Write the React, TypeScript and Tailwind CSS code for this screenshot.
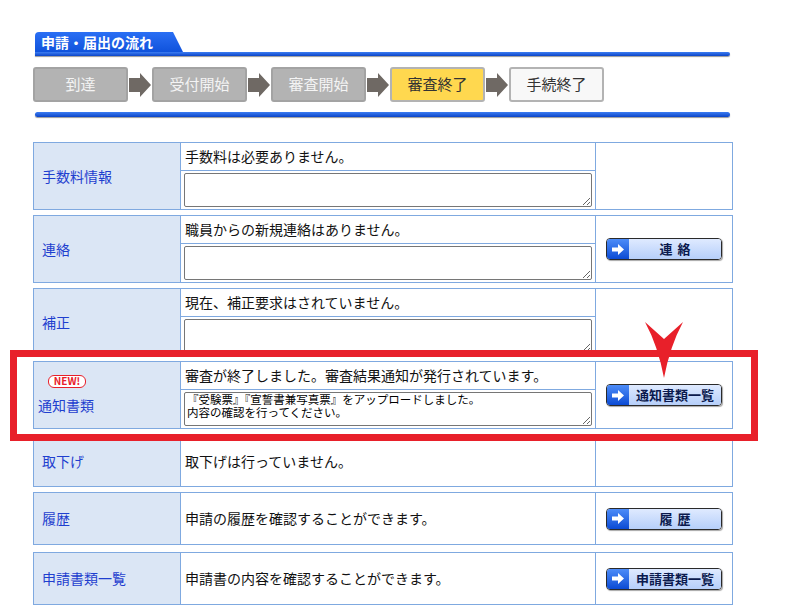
import React from 'react';

const FONT = "font-['Noto_Sans_CJK_JP','Noto_Sans',sans-serif]";

type Step = { label: string; tone: 'done' | 'current' | 'todo' };

const steps: Step[] = [
  { label: '到達', tone: 'done' },
  { label: '受付開始', tone: 'done' },
  { label: '審査開始', tone: 'done' },
  { label: '審査終了', tone: 'current' },
  { label: '手続終了', tone: 'todo' },
];

function StepArrow() {
  return (
    <svg width="22" height="24" viewBox="0 0 22 24" className="mx-px shrink-0">
      <path d="M0 5h11V0l11 12-11 12v-5H0z" fill="#6f6964" />
    </svg>
  );
}

function StepBox({ step }: { step: Step }) {
  const tone =
    step.tone === 'done'
      ? 'bg-[#b3b3b3] border-[#a3a3a3] text-[#f4f4f4]'
      : step.tone === 'current'
        ? 'bg-[#ffd84f] border-[#b3b3b3] text-[#333]'
        : 'bg-[#f8f8f8] border-[#b3b3b3] text-[#333]';
  return (
    <div
      className={`flex h-[35px] w-[95px] shrink-0 items-center justify-center rounded-[3px] border-2 text-[15px] ${tone}`}
    >
      {step.label}
    </div>
  );
}

function LinkButton({ label, spaced }: { label: string; spaced?: boolean }) {
  return (
    <div className="flex h-[22px] w-[116px] overflow-hidden rounded-[4px] border border-[#2a2a2a] shadow-[1px_1px_1px_rgba(0,0,0,0.35)]">
      <div className="flex w-[22px] items-center justify-center bg-gradient-to-b from-[#4d8cf8] to-[#0a4ad4]">
        <svg width="12" height="11" viewBox="0 0 12 11">
          <path d="M0 3.5h6V0l6 5.5-6 5.5V7.5H0z" fill="#fff" />
        </svg>
      </div>
      <div
        className={`flex flex-1 items-center justify-center bg-gradient-to-b from-[#dfeaff] to-[#b6cffa] text-[13px] font-bold text-[#0b1a4e] ${
          spaced ? 'tracking-[5px] pl-[5px]' : ''
        }`}
      >
        {label}
      </div>
    </div>
  );
}

function Row({
  label,
  text,
  note,
  button,
  badge,
}: {
  label: string;
  text: string;
  note?: string;
  button?: React.ReactNode;
  badge?: boolean;
}) {
  return (
    <div className="flex h-[68px] border border-[#7fa9e0]">
      <div
        className={`flex w-[147px] shrink-0 flex-col justify-center border-r border-[#7fa9e0] bg-[#dbe6f5] text-[14px] text-[#1f3fcf] ${
          badge ? 'pl-[4px]' : 'pl-[8px]'
        }`}
      >
        {badge && (
          <span className="mb-[7px] ml-[10px] flex h-[13px] w-[38px] items-center justify-center rounded-[6px] border-[1.5px] border-[#e8202a] bg-white text-[10px] font-bold leading-none text-[#e8202a]">
            NEW!
          </span>
        )}
        <span>{label}</span>
      </div>
      <div className="flex w-[415px] shrink-0 flex-col border-r border-[#7fa9e0]">
        <div className="flex h-[28px] items-center border-b border-[#7fa9e0] pl-[4px] text-[14px] text-[#111]">
          {text}
        </div>
        <div className="flex-1 px-[3px] pt-[2px]">
          <textarea
            readOnly
            defaultValue={note ?? ''}
            className={`block h-[34px] w-full rounded-[2px] border border-[#767676] bg-white px-[2px] py-0 text-[11.5px] leading-[13px] text-black outline-none ${FONT}`}
          />
        </div>
      </div>
      <div className="flex flex-1 items-center justify-center">{button}</div>
    </div>
  );
}

function SimpleRow({
  label,
  text,
  button,
  height,
}: {
  label: string;
  text: string;
  button?: React.ReactNode;
  height: string;
}) {
  return (
    <div className={`flex border border-[#7fa9e0] ${height}`}>
      <div className="flex w-[147px] shrink-0 items-center border-r border-[#7fa9e0] bg-[#dbe6f5] pl-[8px] text-[14px] text-[#1f3fcf]">
        {label}
      </div>
      <div className="flex w-[415px] shrink-0 items-center border-r border-[#7fa9e0] pl-[4px] text-[14px] text-[#111]">
        {text}
      </div>
      <div className="flex flex-1 items-center justify-center">{button}</div>
    </div>
  );
}

export default function App() {
  return (
    <div className={`relative h-[606px] w-[796px] overflow-hidden bg-white pl-[33px] pt-[32px] ${FONT}`}>
      {/* heading */}
      <div className="w-[697px] pl-[2px]">
        <div className="flex h-[20px] w-[148px] items-center rounded-tl-[4px] bg-gradient-to-b from-[#2a6ff4] to-[#0f52dc] pl-[6px] text-[14px] font-bold text-white [clip-path:polygon(0_0,138px_0,148px_100%,0_100%)]">
          申請・届出の流れ
        </div>
        <div className="h-[4px] rounded-r-[2px] bg-gradient-to-b from-[#3c7cf2] to-[#0b44c8] shadow-[0_1px_1px_#9a9a9a]" />
      </div>

      {/* steps */}
      <div className="mt-[11px] flex items-center">
        {steps.map((s, i) => (
          <React.Fragment key={s.label}>
            {i > 0 && <StepArrow />}
            <StepBox step={s} />
          </React.Fragment>
        ))}
      </div>

      <div className="ml-[2px] mt-[10px] h-[5px] w-[695px] rounded-[3px] bg-gradient-to-b from-[#3c7cf2] to-[#0b44c8] shadow-[0_1px_1px_#9a9a9a]" />

      {/* rows */}
      <div className="mt-[25px] flex w-[700px] flex-col gap-[5px]">
        <Row label="手数料情報" text="手数料は必要ありません。" />
        <Row label="連絡" text="職員からの新規連絡はありません。" button={<LinkButton label="連絡" spaced />} />
        <Row label="補正" text="現在、補正要求はされていません。" />
        <Row
          badge
          label="通知書類"
          text="審査が終了しました。審査結果通知が発行されています。"
          note={'『受験票』『宣誓書兼写真票』をアップロードしました。\n内容の確認を行ってください。'}
          button={<LinkButton label="通知書類一覧" />}
        />
        <div className="mt-px">
          <SimpleRow label="取下げ" text="取下げは行っていません。" height="h-[52px]" />
        </div>
        <SimpleRow label="履歴" text="申請の履歴を確認することができます。" height="h-[53px]" button={<LinkButton label="履歴" spaced />} />
        <div className="mt-[2px]">
          <SimpleRow
            label="申請書類一覧"
            text="申請書の内容を確認することができます。"
            height="h-[53px]"
            button={<LinkButton label="申請書類一覧" />}
          />
        </div>
      </div>

      {/* highlight overlay */}
      <div className="pointer-events-none absolute left-[10px] top-[350px] h-[91px] w-[748px] border-[7px] border-[#e8202a]" />
      <svg
        className="pointer-events-none absolute left-[645px] top-[322px]"
        width="39"
        height="57"
        viewBox="0 0 39 57"
      >
        <path d="M0 0L19 17L38 0Q25 24 19 56Q13 24 0 0Z" fill="#e8202a" />
      </svg>
    </div>
  );
}
